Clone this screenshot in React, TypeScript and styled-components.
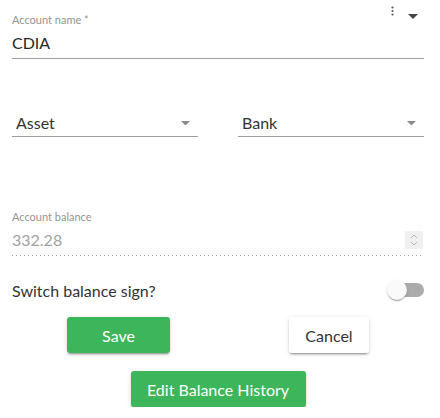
import React, { FC, useState } from "react";
import styled, { createGlobalStyle } from "styled-components";

const GlobalStyle = createGlobalStyle`
  html, body {
    margin: 0;
    padding: 0;
    background: #ffffff;
  }
  body {
    font-family: Lato, "Open Sans", "Liberation Sans", sans-serif;
    width: 440px;
  }
`;

const Page = styled.div`
  display: flex;
  flex-direction: column;
  padding: 0 16px 0 12px;
`;

const TopBar = styled.div`
  height: 12px;
  display: flex;
  justify-content: flex-end;
  align-items: flex-start;
  gap: 14px;
  padding-right: 6px;
  color: #555555;
`;

const Field = styled.div<{ $top: number }>`
  display: flex;
  flex-direction: column;
  margin-top: ${(p) => p.$top}px;
`;

const Label = styled.div`
  font-size: 11px;
  line-height: 14px;
  height: 14px;
  color: #949494;
  margin-bottom: 5px;
`;

const InputLine = styled.div<{ $disabled?: boolean }>`
  display: flex;
  align-items: center;
  justify-content: space-between;
  font-size: 16px;
  line-height: 22px;
  padding-bottom: 4px;
  color: ${(p) => (p.$disabled ? "#a3a3a3" : "#262626")};
  ${(p) =>
    p.$disabled
      ? `
    padding-bottom: 5px;
    background-image: linear-gradient(to right, #a6a6a6 1px, transparent 1px);
    background-size: 4px 1px;
    background-repeat: repeat-x;
    background-position: left bottom;
    margin-right: 3px;
  `
      : `border-bottom: 1px solid #9e9e9e;`}
`;

const SelectRow = styled.div`
  display: grid;
  grid-template-columns: 186px 186px;
  justify-content: space-between;
  margin-top: 53px;
`;

const Select = styled.div`
  display: flex;
  align-items: center;
  justify-content: space-between;
  font-size: 16px;
  line-height: 22px;
  padding: 0 8px 2px 4px;
  color: #333333;
  border-bottom: 1px solid #9e9e9e;
`;

const Spinner = styled.div`
  width: 18px;
  height: 18px;
  margin-right: -2px;
  background: #f0f0f0;
  display: flex;
  align-items: center;
  justify-content: center;
`;

const SwitchRow = styled.div`
  display: flex;
  align-items: center;
  justify-content: space-between;
  margin-top: 23px;
  height: 22px;
  font-size: 16px;
  color: #333333;
`;

const Toggle = styled.button<{ $on: boolean }>`
  position: relative;
  width: 37px;
  height: 22px;
  border: none;
  background: transparent;
  padding: 0;
  cursor: pointer;

  &::before {
    content: "";
    position: absolute;
    left: 3px;
    right: 0;
    top: 4px;
    height: 14px;
    border-radius: 7px;
    background: ${(p) => (p.$on ? "#8fd4a1" : "#ababab")};
  }

  &::after {
    content: "";
    position: absolute;
    top: 1px;
    left: ${(p) => (p.$on ? "16px" : "0")};
    width: 20px;
    height: 20px;
    border-radius: 50%;
    background: ${(p) => (p.$on ? "#3db65b" : "#fafafa")};
    box-shadow: 0 2px 1px -1px rgba(0, 0, 0, 0.2), 0 1px 1px 0 rgba(0, 0, 0, 0.14),
      0 1px 3px 0 rgba(0, 0, 0, 0.12);
  }
`;

const ButtonRow = styled.div`
  display: flex;
  justify-content: space-between;
  margin-top: 16px;
  padding: 0 55px 0 55px;
`;

const Button = styled.button<{ $variant?: "primary" | "plain"; $width: number }>`
  width: ${(p) => p.$width}px;
  height: 36px;
  border: none;
  border-radius: 3px;
  font-family: inherit;
  font-size: 16px;
  cursor: pointer;
  background: ${(p) => (p.$variant === "plain" ? "#ffffff" : "#3db65b")};
  color: ${(p) => (p.$variant === "plain" ? "#333333" : "#ffffff")};
  box-shadow: 0 3px 1px -2px rgba(0, 0, 0, 0.2), 0 2px 2px 0 rgba(0, 0, 0, 0.14),
    0 1px 5px 0 rgba(0, 0, 0, 0.12);
`;

const BottomRow = styled.div`
  display: flex;
  justify-content: center;
  margin-top: 18px;
`;

const Kebab = () => (
  <svg width="3" height="10" viewBox="0 0 3 10">
    <circle cx="1.5" cy="1.5" r="1.1" fill="currentColor" />
    <circle cx="1.5" cy="5" r="1.1" fill="currentColor" />
    <circle cx="1.5" cy="8.5" r="1.1" fill="currentColor" />
  </svg>
);

const Caret: FC<{ color?: string; w?: number }> = ({ color = "#8c8c8c", w = 10 }) => (
  <svg width={w} height={w / 2} viewBox="0 0 10 5">
    <path d="M0 0 L10 0 L5 5 Z" fill={color} />
  </svg>
);

const SpinArrows = () => (
  <svg width="8" height="14" viewBox="0 0 8 14">
    <path d="M1 5 L4 2 L7 5" fill="none" stroke="#b5b5b5" strokeWidth="1" />
    <path d="M1 9 L4 12 L7 9" fill="none" stroke="#b5b5b5" strokeWidth="1" />
  </svg>
);

const App: FC = () => {
  const [negative, setNegative] = useState(false);

  return (
    <>
      <GlobalStyle />
      <Page>
        <TopBar>
          <span>
            <Kebab />
          </span>
          <span style={{ marginTop: 3 }}>
            <Caret color="#444444" />
          </span>
        </TopBar>

        <Field $top={1}>
          <Label>Account name *</Label>
          <InputLine>CDIA</InputLine>
        </Field>

        <SelectRow>
          <Select>
            <span>Asset</span>
            <Caret w={9} />
          </Select>
          <Select>
            <span>Bank</span>
            <Caret w={9} />
          </Select>
        </SelectRow>

        <Field $top={73}>
          <Label>Account balance</Label>
          <InputLine $disabled>
            <span>332.28</span>
            <Spinner>
              <SpinArrows />
            </Spinner>
          </InputLine>
        </Field>

        <SwitchRow>
          <span>Switch balance sign?</span>
          <Toggle $on={negative} onClick={() => setNegative(!negative)} />
        </SwitchRow>

        <ButtonRow>
          <Button $width={103}>Save</Button>
          <Button $variant="plain" $width={80}>
            Cancel
          </Button>
        </ButtonRow>

        <BottomRow>
          <Button $width={175}>Edit Balance History</Button>
        </BottomRow>
      </Page>
    </>
  );
};

export default App;
